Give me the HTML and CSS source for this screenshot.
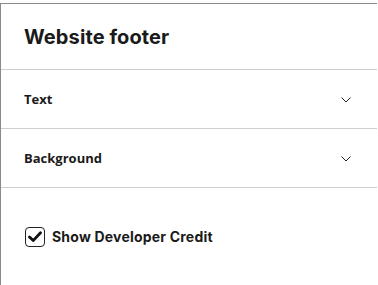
FILE: index.html
```html
<!DOCTYPE html>
<html>
<head>
<meta charset="utf-8">
<link rel="stylesheet" href="styles.css">
</head>
<body>
<div class="panel">
  <div class="panel-header">
    <h1 class="title">Website footer</h1>
  </div>
  <div class="section">
    <span class="section-label">Text</span>
    <svg class="chevron" width="10" height="6" viewBox="0 0 10 6"><path d="M0.5 0.5 L5 5 L9.5 0.5" fill="none" stroke="#222" stroke-width="1"/></svg>
  </div>
  <div class="section">
    <span class="section-label">Background</span>
    <svg class="chevron" width="10" height="6" viewBox="0 0 10 6"><path d="M0.5 0.5 L5 5 L9.5 0.5" fill="none" stroke="#222" stroke-width="1"/></svg>
  </div>
  <label class="credit">
    <span class="checkbox">
      <svg width="14" height="12" viewBox="0 0 14 12"><path d="M1.5 6 L5.2 9.6 L12.5 1.8" fill="none" stroke="#111" stroke-width="2.8" stroke-linecap="round" stroke-linejoin="round"/></svg>
    </span>
    <span class="credit-label">Show Developer Credit</span>
  </label>
</div>
</body>
</html>
```
FILE: styles.css
```css
html, body {
  margin: 0;
  padding: 0;
  background: #fff;
}
.panel {
  margin-top: 3px;
  width: 377px;
  height: 282px;
  border-top: 1px solid #8a8a8a;
  border-left: 1px solid #8a8a8a;
  box-sizing: border-box;
  color: #1a1a1a;
}
.panel-header {
  height: 66px;
  border-bottom: 1px solid #cfcfcf;
  box-sizing: border-box;
  display: flex;
  align-items: center;
  padding-left: 23px;
}
.title {
  margin: 0;
  font-family: "Inter", sans-serif;
  font-weight: 700;
  font-size: 20px;
  letter-spacing: 0.1px;
}
.section {
  height: 59px;
  border-bottom: 1px solid #cfcfcf;
  box-sizing: border-box;
  display: flex;
  align-items: center;
  justify-content: space-between;
  padding: 0 23px 0 23px;
}
.section-label {
  font-family: "Open Sans", sans-serif;
  font-weight: 700;
  font-size: 13px;
}
.chevron {
  margin-right: 3px;
  margin-top: 1px;
}
.credit {
  display: flex;
  align-items: center;
  gap: 7px;
  padding: 39px 0 0 24px;
}
.checkbox {
  width: 20px;
  height: 20px;
  box-sizing: border-box;
  border: 1.5px solid #222;
  border-radius: 4px;
  display: flex;
  align-items: center;
  justify-content: center;
}
.credit-label {
  font-family: "Inter", sans-serif;
  font-weight: 700;
  font-size: 14px;
  letter-spacing: 0.2px;
  margin-top: -1px;
}
```
